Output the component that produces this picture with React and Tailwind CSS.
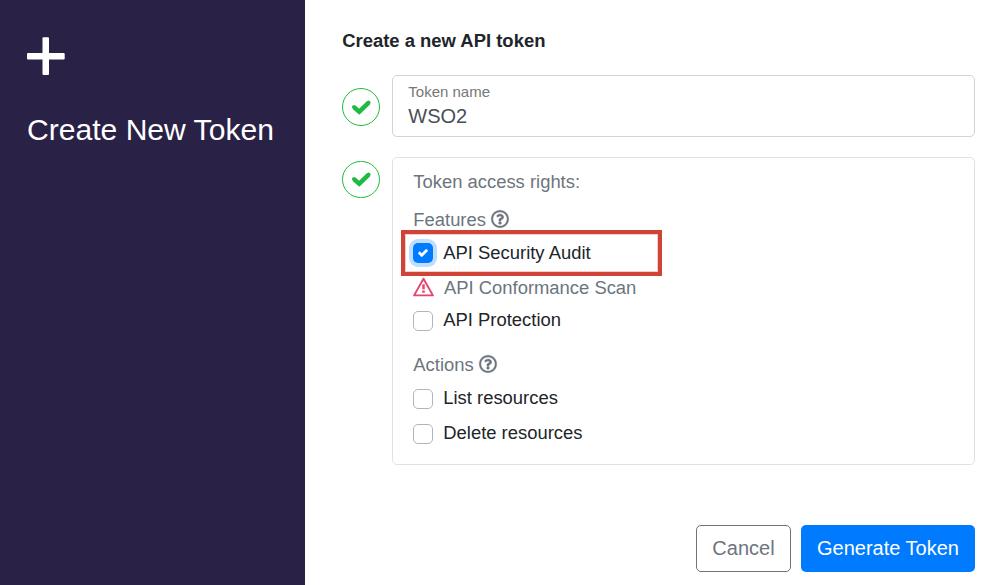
import React from "react";

function StepBadge({ className }) {
  return (
    <div className={`flex w-[38px] shrink-0 items-center justify-center rounded-full border border-[#1fba42] ${className}`}>
      <svg viewBox="0 0 19 19" className="h-[19px] w-[19px] fill-none stroke-[#1fba42]">
        <path d="M2 9.100 7.200 13.800 16.600 4.600" strokeWidth="4.400" strokeLinecap="butt" strokeLinejoin="miter" />
        <path d="M2 9.100 7.200 13.800 16.600 4.600" strokeWidth="3.800" strokeLinecap="round" strokeLinejoin="round" />
      </svg>
    </div>
  );
}

function HelpIcon() {
  return (
    <svg viewBox="0 0 512 512" className="-mt-[2px] ml-px h-[18px] w-[18px] shrink-0 overflow-visible fill-[#6c757d] stroke-[#6c757d]" strokeWidth="10">
      <path d="M256 8C119 8 8 119.100 8 256c0 137 111 248 248 248s248-111 248-248C504 119.100 393 8 256 8zm0 448c-110.500 0-200-89.400-200-200 0-110.500 89.500-200 200-200 110.500 0 200 89.500 200 200 0 110.500-89.400 200-200 200zm107.200-255.200c0 67.100-72.400 68.100-72.400 92.900V300c0 6.600-5.400 12-12 12h-45.600c-6.600 0-12-5.400-12-12v-8.700c0-35.700 27.100-50 47.600-61.500 17.600-9.800 28.300-16.500 28.300-29.600 0-17.200-22-28.700-39.800-28.700-23.200 0-33.900 11-48.900 30-4.100 5.100-11.500 6.100-16.700 2.100l-27.800-21.100c-5.100-3.900-6.300-11.100-2.600-16.400C184.800 131.500 214.900 112 261.800 112c49.100 0 101.500 38.300 101.500 88.800zM298 368c0 23.200-18.800 42-42 42s-42-18.800-42-42 18.800-42 42-42 42 18.800 42 42z" />
    </svg>
  );
}

function Option({ label, checked, className }) {
  return (
    <label className={`flex text-[#212529] ${className}`}>
      {checked ? (
        <span className="mt-1 flex h-5 w-5 items-center justify-center rounded-[5px] bg-[#007bff] shadow-[0_0_0_4px_#bfdeff]">
          <svg viewBox="0 0 8 8" className="h-[10px] w-[10px] fill-white stroke-white" strokeWidth="0.300">
            <path d="M6.564.75l-3.590 3.612-1.538-1.550L0 4.260l2.974 2.990L8 2.193z" />
          </svg>
        </span>
      ) : (
        <span className="mt-[5px] h-5 w-5 rounded-[5px] border border-[#adb5bd] bg-white" />
      )}
      <span className="ml-[10.300px]">{label}</span>
    </label>
  );
}

export default function App() {
  return (
    <div className="flex h-[585px] w-[983px] overflow-hidden bg-white font-['Liberation_Sans',Arial,sans-serif]">
      <aside className="w-[305px] shrink-0 bg-[#2a2146] pl-[27px] pt-[37px] text-white">
        <svg viewBox="0 0 38 38" className="h-[38px] w-[38px] fill-white">
          <rect x="15.500" y="0.300" width="6.500" height="37.600" rx="1" />
          <rect x="0" y="16" width="37.700" height="6.500" rx="1" />
        </svg>
        <h1 className="mt-[37px] whitespace-nowrap text-[30.080px] leading-9">Create New Token</h1>
      </aside>

      <main className="flex flex-1 flex-col pl-[37px] pr-2 pt-[27px]">
        <h2 className="pl-[0.200px] text-[18.450px] font-bold leading-7 text-[#212529]">Create a new API token</h2>

        <div className="mt-5 flex items-start">
          <StepBadge className="mt-[13px] h-[38px]" />
          <div className="ml-3 h-[62px] flex-1 rounded-[5px] border border-[#ced4da] pl-[15.300px] pt-[6px]">
            <div className="text-[15px] leading-5 text-[#777]">Token name</div>
            <div className="mt-[2px] text-[20px] leading-6 text-[#495057]">WSO2</div>
          </div>
        </div>

        <div className="mt-5 flex items-start">
          <StepBadge className="mt-1 h-[37px]" />
          <section className="ml-3 h-[308px] flex-1 rounded-[5px] border border-[#dee2e6] pl-5 pt-[10px] text-[18.420px] leading-7 text-[#6c757d]">
            <p className="pl-[0.300px]">Token access rights:</p>
            <div className="mt-[10px] flex items-center gap-1 pl-[0.300px]">
              Features <HelpIcon />
            </div>
            <div className="-ml-3 -mt-1 h-[46px] w-[261px] border-4 border-[#d04437] pl-2 pt-[5px] shadow-[inset_0_0_0_1px_#f3cdca]">
              <Option label="API Security Audit" checked />
            </div>
            <div className="-mt-[2px] flex items-center">
              <svg viewBox="0 0 21 20" className="-mt-[2px] h-5 w-[21px] fill-none stroke-[#e5446d]">
                <path d="M10.500 1.700 19.900 18.400H1.100Z" strokeWidth="1.900" strokeLinejoin="round" />
                <path d="M10.500 7.300v5" strokeWidth="2.500" />
                <path d="M10.500 13.500v2.300" strokeWidth="2.500" />
              </svg>
              <span className="ml-[10px]">API Conformance Scan</span>
            </div>
            <Option label="API Protection" className="mt-1" />
            <div className="mt-[17px] flex items-center gap-1 pl-[0.300px]">
              Actions <HelpIcon />
            </div>
            <Option label="List resources" className="mt-[5px]" />
            <Option label="Delete resources" className="mt-[7px]" />
          </section>
        </div>

        <div className="mt-[60px] flex justify-end gap-[10px] text-[20px]">
          <button className="h-[47px] w-[95px] rounded-[5px] border border-[#6c757d] pb-[2px] text-[#6c757d]">Cancel</button>
          <button className="h-[47px] w-[174px] whitespace-nowrap rounded-[5px] bg-[#007bff] pb-[2px] text-white">Generate Token</button>
        </div>
      </main>
    </div>
  );
}
